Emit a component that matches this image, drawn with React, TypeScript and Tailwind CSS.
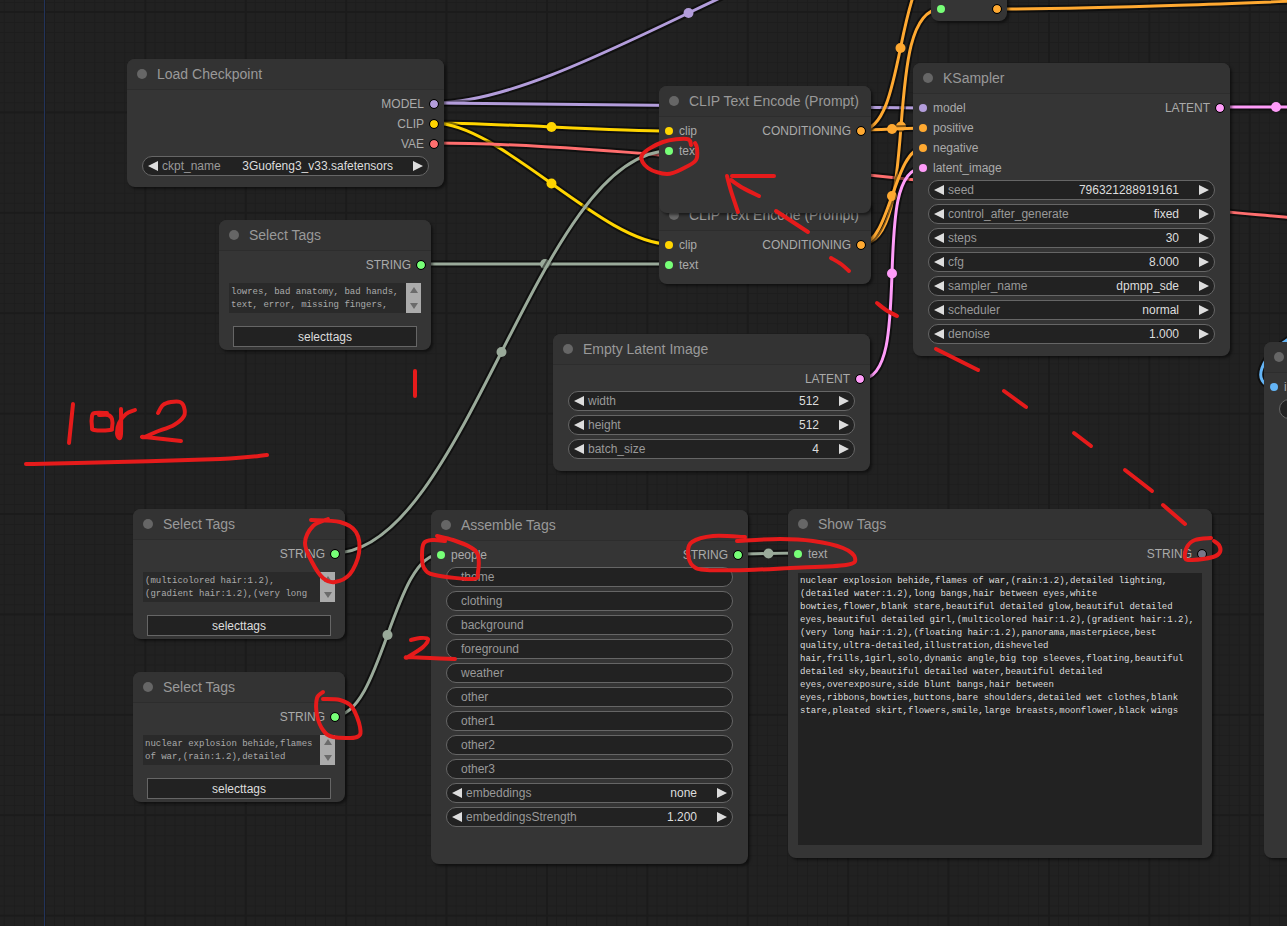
import type { ReactNode } from "react";

type Point = [number, number];

const COLORS = {
  model: "#b39ddb",
  clip: "#ffd500",
  vae: "#ff6e6e",
  cond: "#ffa931",
  latent: "#ff9cf9",
  image: "#64b5f6",
  string: "#9aaa9a",
};

const LINKS: { from: Point; to: Point; color: string }[] = [
  { from: [434, 103], to: [943, -77], color: COLORS.model },
  { from: [434, 103], to: [923, 108], color: COLORS.model },
  { from: [434, 123], to: [669, 131], color: COLORS.clip },
  { from: [434, 123], to: [669, 244], color: COLORS.clip },
  { from: [434, 143], to: [1500, 228], color: COLORS.vae },
  { from: [421, 264], to: [669, 264], color: COLORS.string },
  { from: [334, 553], to: [669, 151], color: COLORS.string },
  { from: [334, 716], to: [441, 554], color: COLORS.string },
  { from: [739, 554], to: [798, 553], color: COLORS.string },
  { from: [861, 244], to: [941, 9], color: COLORS.cond },
  { from: [861, 130], to: [923, 128], color: COLORS.cond },
  { from: [861, 130], to: [940, -34], color: COLORS.cond },
  { from: [861, 244], to: [923, 148], color: COLORS.cond },
  { from: [997, 9], to: [1800, -15], color: COLORS.cond },
  { from: [861, 379], to: [923, 168], color: COLORS.latent },
  { from: [1220, 107], to: [1332, 107], color: COLORS.latent },
];

// hand drawn marks, one list of points per pen stroke
const MARKS: Point[][] = [
  [[691, 145], [687, 139], [663, 142], [642, 155], [648, 168], [667, 174], [684, 168], [696, 160], [697, 148], [695, 143]],
  [[732, 176], [774, 176]],
  [[731, 180], [743, 188], [759, 196]],
  [[727, 176], [731, 191], [738, 212]],
  [[776, 211], [808, 232]],
  [[831, 258], [841, 264], [849, 271]],
  [[877, 303], [886, 310], [897, 316]],
  [[936, 349], [978, 370]],
  [[1004, 391], [1026, 407]],
  [[1074, 433], [1091, 446]],
  [[1125, 470], [1152, 491]],
  [[1163, 505], [1185, 524]],
  [[73, 404], [69, 443]],
  [[107, 413], [95, 413], [92, 416], [92, 427], [94, 430], [110, 430], [112, 428], [112, 419], [108, 415], [99, 415]],
  [[121, 409], [121, 434], [119, 438], [117, 433], [119, 423], [126, 414], [135, 410]],
  [[158, 413], [163, 405], [171, 402], [180, 402], [184, 407], [184, 416], [174, 425], [156, 432], [145, 437], [145, 437], [181, 441]],
  [[26, 464], [77, 463], [220, 459], [267, 455]],
  [[415, 371], [415, 396]],
  [[328, 519], [313, 526], [305, 543], [312, 562], [323, 578], [335, 582], [350, 574], [359, 553], [356, 532], [340, 522], [311, 520]],
  [[323, 692], [317, 698], [317, 715], [323, 730], [333, 737], [357, 737], [360, 727], [352, 707], [340, 700], [323, 699]],
  [[411, 640], [420, 638], [428, 639], [423, 647], [408, 657], [408, 657], [430, 658], [455, 659]],
  [[445, 541], [433, 540], [424, 543], [422, 555], [424, 568], [435, 575], [473, 579], [478, 572], [478, 555], [470, 547], [453, 540], [437, 536]],
  [[745, 537], [713, 536], [692, 542], [688, 553], [693, 566], [707, 570], [747, 570], [790, 568], [846, 565], [855, 558], [843, 548], [813, 541], [780, 539], [737, 541]],
  [[1211, 538], [1195, 540], [1187, 547], [1185, 558], [1192, 560], [1213, 557], [1220, 552], [1219, 545], [1214, 541]],
];

const TAGS = `nuclear explosion behide,flames of war,(rain:1.2),detailed lighting,
(detailed water:1.2),long bangs,hair between eyes,white
bowties,flower,blank stare,beautiful detailed glow,beautiful detailed
eyes,beautiful detailed girl,(multicolored hair:1.2),(gradient hair:1.2),
(very long hair:1.2),(floating hair:1.2),panorama,masterpiece,best
quality,ultra-detailed,illustration,disheveled
hair,frills,1girl,solo,dynamic angle,big top sleeves,floating,beautiful
detailed sky,beautiful detailed water,beautiful detailed
eyes,overexposure,side blunt bangs,hair between
eyes,ribbons,bowties,buttons,bare shoulders,detailed wet clothes,blank
stare,pleated skirt,flowers,smile,large breasts,moonflower,black wings`;

function linkPath(from: Point, to: Point) {
  const d = Math.hypot(to[0] - from[0], to[1] - from[1]) * 0.25;
  return `M${from[0]} ${from[1]} C${from[0] + d} ${from[1]} ${to[0] - d} ${to[1]} ${to[0]} ${to[1]}`;
}

// smooth curve that runs through every point
function penPath(pts: Point[]) {
  let d = `M${pts[0][0]} ${pts[0][1]}`;
  for (let i = 0; i < pts.length - 1; i++) {
    const a = pts[i - 1] ?? pts[i];
    const b = pts[i];
    const c = pts[i + 1];
    const e = pts[i + 2] ?? c;
    d += ` C${b[0] + (c[0] - a[0]) / 6} ${b[1] + (c[1] - a[1]) / 6} ${c[0] - (e[0] - b[0]) / 6} ${c[1] - (e[1] - b[1]) / 6} ${c[0]} ${c[1]}`;
  }
  return d;
}

function Grid() {
  return (
    <svg className="absolute inset-0 h-full w-full" aria-hidden="true">
      <defs>
        <pattern id="minor" width="10" height="10" patternUnits="userSpaceOnUse" patternTransform="translate(44 12) scale(1.004)">
          <path d="M0.5 0V10M0 0.5H10" stroke="#1d1d1d" strokeWidth="1" />
        </pattern>
        <pattern id="major" width="100" height="100" patternUnits="userSpaceOnUse" patternTransform="translate(44 11) scale(1.004)">
          <path d="M1 0V100M0 1H100" stroke="#1b1b1b" strokeWidth="2" />
        </pattern>
      </defs>
      <rect width="100%" height="100%" fill="url(#minor)" />
      <rect width="100%" height="100%" fill="url(#major)" />
      <path d="M44.5 0V4000" stroke="#22335a" />
    </svg>
  );
}

function Links() {
  return (
    <svg className="absolute inset-0 h-full w-full" fill="none" aria-hidden="true">
      {LINKS.map(({ from, to, color }, i) => (
        <g key={i}>
          <path d={linkPath(from, to)} stroke="#000" strokeOpacity="0.5" strokeWidth="7" />
          <path d={linkPath(from, to)} stroke={color} strokeWidth="3" />
          <circle cx={(from[0] + to[0]) / 2} cy={(from[1] + to[1]) / 2} r="5" fill={color} />
        </g>
      ))}
      <path d="M1292 337C1260 356 1250 384 1274 387" stroke="#000" strokeOpacity="0.5" strokeWidth="7" />
      <path d="M1292 337C1260 356 1250 384 1274 387" stroke={COLORS.image} strokeWidth="3" />
    </svg>
  );
}

function Marks() {
  return (
    <svg className="pointer-events-none absolute inset-0 h-full w-full" fill="none" aria-hidden="true">
      {MARKS.map((pts, i) => (
        <path key={i} d={penPath(pts)} stroke="#e61b1b" strokeWidth="4" strokeLinecap="round" strokeLinejoin="round" />
      ))}
    </svg>
  );
}

function Node({ title, className, children }: { title: string; className: string; children: ReactNode }) {
  return (
    <section className={`absolute flex flex-col rounded-lg bg-[#353535] shadow-[2px_2px_3px_rgba(0,0,0,0.5)] ${className}`}>
      <header className="flex h-[31px] shrink-0 items-center gap-[10px] rounded-t-lg border-b border-[#2d2d2d] bg-[#333333] pl-[10px]">
        <span className="size-[10px] shrink-0 rounded-full bg-[#666666]" />
        <h2 className="text-sm whitespace-nowrap text-[#999999]">{title}</h2>
      </header>
      {children}
    </section>
  );
}

function Slots({ children }: { children: ReactNode }) {
  return <div className="flex shrink-0 justify-between px-[6px] pt-1">{children}</div>;
}

function Input({ label, dot }: { label: string; dot: string }) {
  return (
    <li className="flex h-5 items-center gap-[6px]">
      <span className={`size-2 rounded-full ${dot}`} />
      {label}
    </li>
  );
}

function Output({ label, dot }: { label: string; dot: string }) {
  return (
    <li className="flex h-5 items-center justify-end gap-[6px]">
      {label}
      <span className={`size-2 rounded-full outline outline-black ${dot}`} />
    </li>
  );
}

function Arrow({ side, label }: { side: "left" | "right"; label: string }) {
  return (
    <button type="button" aria-label={label} className="shrink-0">
      <svg width="10" height="10" fill="#dddddd" className="block">
        <path d={side === "left" ? "M10 0V10L0 5Z" : "M0 0V10L10 5Z"} />
      </svg>
    </button>
  );
}

function Widget({ name, value, combo }: { name: string; value: string; combo?: boolean }) {
  return (
    <div className="flex h-5 items-center rounded-full border border-[#666666] bg-[#222222] px-[5px]">
      <Arrow side="left" label={`previous ${name}`} />
      <label className="flex min-w-0 flex-1 items-center pr-5 pl-1">
        <span className="text-[#999999]">{name}</span>
        {combo ? (
          <select className="min-w-0 flex-1 appearance-none text-right text-[#dddddd] [text-align-last:right]">
            <option>{value}</option>
          </select>
        ) : (
          <input className="w-0 min-w-0 flex-1 text-right text-[#dddddd]" defaultValue={value} />
        )}
      </label>
      <Arrow side="right" label={`next ${name}`} />
    </div>
  );
}

function TextWidget({ name }: { name: string }) {
  return (
    <label className="flex h-5 items-center rounded-full border border-[#666666] bg-[#222222] px-[14px] text-[#999999]">
      {name}
      <input className="min-w-0 flex-1" />
    </label>
  );
}

function Widgets({ children }: { children: ReactNode }) {
  return <div className="flex flex-col gap-1 px-[15px] pt-[2px]">{children}</div>;
}

function SelectTags({ className, text }: { className: string; text: string }) {
  return (
    <Node title="Select Tags" className={className}>
      <Slots>
        <ul />
        <ul>
          <Output label="STRING" dot="bg-[#77ff77]" />
        </ul>
      </Slots>
      <div className="mx-[10px] mt-2 flex h-[30px]">
        <textarea
          aria-label="tags"
          className="min-w-0 flex-1 resize-none overflow-hidden bg-[#2a2a2a] px-[2px] pt-[3px] font-['Liberation_Mono',monospace] text-[9px] leading-[13px] whitespace-pre text-[#aaaaaa]"
          defaultValue={text}
        />
        <div className="flex w-[15px] flex-col items-center justify-between bg-[#ababab] py-1">
          <svg width="8" height="6" fill="#6b6b6b">
            <path d="M0 6H8L4 0Z" />
          </svg>
          <svg width="8" height="6" fill="#6b6b6b">
            <path d="M0 0H8L4 6Z" />
          </svg>
        </div>
      </div>
      <button type="button" className="mx-[14px] mt-[13px] h-[21px] border border-[#666666] bg-[#222222] text-[#dddddd]">
        selecttags
      </button>
    </Node>
  );
}

function ClipEncode({ className }: { className: string }) {
  return (
    <Node title="CLIP Text Encode (Prompt)" className={className}>
      <Slots>
        <ul>
          <Input label="clip" dot="bg-[#ffd500]" />
          <Input label="text" dot="bg-[#77ff77]" />
        </ul>
        <ul>
          <Output label="CONDITIONING" dot="bg-[#ffa931]" />
        </ul>
      </Slots>
    </Node>
  );
}

export default function App() {
  return (
    <main className="relative h-screen w-full overflow-hidden bg-[#212121] font-['Liberation_Sans',Arial,sans-serif] text-xs text-[#aaaaaa]">
      <Grid />
      <Links />

      <Node title="Load Checkpoint" className="top-[59px] left-[127px] h-[128px] w-[317px]">
        <Slots>
          <ul />
          <ul>
            <Output label="MODEL" dot="bg-[#b39ddb]" />
            <Output label="CLIP" dot="bg-[#ffd500]" />
            <Output label="VAE" dot="bg-[#ff6e6e]" />
          </ul>
        </Slots>
        <Widgets>
          <Widget combo name="ckpt_name" value="3Guofeng3_v33.safetensors" />
        </Widgets>
      </Node>

      <SelectTags
        className="top-[220px] left-[219px] h-[130px] w-[212px]"
        text={"lowres, bad anatomy, bad hands,\ntext, error, missing fingers,"}
      />
      <SelectTags
        className="top-[509px] left-[133px] h-[130px] w-[212px]"
        text={"(multicolored hair:1.2),\n(gradient hair:1.2),(very long\nhair:1.2),(floating hair:1.2)"}
      />
      <SelectTags
        className="top-[672px] left-[133px] h-[130px] w-[212px]"
        text={"nuclear explosion behide,flames\nof war,(rain:1.2),detailed\nlighting,(detailed water:1.2)"}
      />

      <ClipEncode className="top-[200px] left-[659px] h-[84px] w-[212px]" />
      <ClipEncode className="top-[86px] left-[659px] h-[127px] w-[212px]" />

      <Node title="Empty Latent Image" className="top-[334px] left-[553px] h-[137px] w-[317px]">
        <Slots>
          <ul />
          <ul>
            <Output label="LATENT" dot="bg-[#ff9cf9]" />
          </ul>
        </Slots>
        <Widgets>
          <Widget name="width" value="512" />
          <Widget name="height" value="512" />
          <Widget name="batch_size" value="4" />
        </Widgets>
      </Node>

      <Node title="KSampler" className="top-[63px] left-[913px] h-[293px] w-[317px]">
        <Slots>
          <ul>
            <Input label="model" dot="bg-[#b39ddb]" />
            <Input label="positive" dot="bg-[#ffa931]" />
            <Input label="negative" dot="bg-[#ffa931]" />
            <Input label="latent_image" dot="bg-[#ff9cf9]" />
          </ul>
          <ul>
            <Output label="LATENT" dot="bg-[#ff9cf9]" />
          </ul>
        </Slots>
        <Widgets>
          <Widget name="seed" value="796321288919161" />
          <Widget combo name="control_after_generate" value="fixed" />
          <Widget name="steps" value="30" />
          <Widget name="cfg" value="8.000" />
          <Widget combo name="sampler_name" value="dpmpp_sde" />
          <Widget combo name="scheduler" value="normal" />
          <Widget name="denoise" value="1.000" />
        </Widgets>
      </Node>

      <Node title="Assemble Tags" className="top-[510px] left-[431px] h-[354px] w-[317px]">
        <Slots>
          <ul>
            <Input label="people" dot="bg-[#77ff77]" />
          </ul>
          <ul>
            <Output label="STRING" dot="bg-[#77ff77]" />
          </ul>
        </Slots>
        <Widgets>
          <TextWidget name="theme" />
          <TextWidget name="clothing" />
          <TextWidget name="background" />
          <TextWidget name="foreground" />
          <TextWidget name="weather" />
          <TextWidget name="other" />
          <TextWidget name="other1" />
          <TextWidget name="other2" />
          <TextWidget name="other3" />
          <Widget combo name="embeddings" value="none" />
          <Widget name="embeddingsStrength" value="1.200" />
        </Widgets>
      </Node>

      <Node title="Show Tags" className="top-[509px] left-[788px] h-[349px] w-[424px]">
        <Slots>
          <ul>
            <Input label="text" dot="bg-[#77ff77]" />
          </ul>
          <ul>
            <Output label="STRING" dot="bg-[#777788]" />
          </ul>
        </Slots>
        <textarea
          readOnly
          aria-label="assembled tags"
          className="mx-[10px] mt-[9px] mb-[13px] flex-1 resize-none overflow-hidden bg-[#222222] p-[2px] font-['Liberation_Mono',monospace] text-[9px] leading-[13px] whitespace-pre text-[#dddddd]"
          value={TAGS}
        />
      </Node>

      {/* node that runs off the top edge */}
      <section className="absolute -top-[10px] left-[931px] flex h-[31px] w-[76px] items-center justify-between rounded-lg bg-[#353535] px-[6px] pt-[7px] shadow-[2px_2px_3px_rgba(0,0,0,0.5)]">
        <span className="size-2 rounded-full bg-[#77ff77]" />
        <span className="size-2 rounded-full bg-[#ffa931] outline outline-black" />
      </section>

      <Node title="" className="top-[342px] left-[1264px] h-[516px] w-[317px]">
        <Slots>
          <ul>
            <Input label="images" dot="bg-[#64b5f6]" />
          </ul>
        </Slots>
        <Widgets>
          <TextWidget name="" />
        </Widgets>
      </Node>

      <Marks />
    </main>
  );
}
